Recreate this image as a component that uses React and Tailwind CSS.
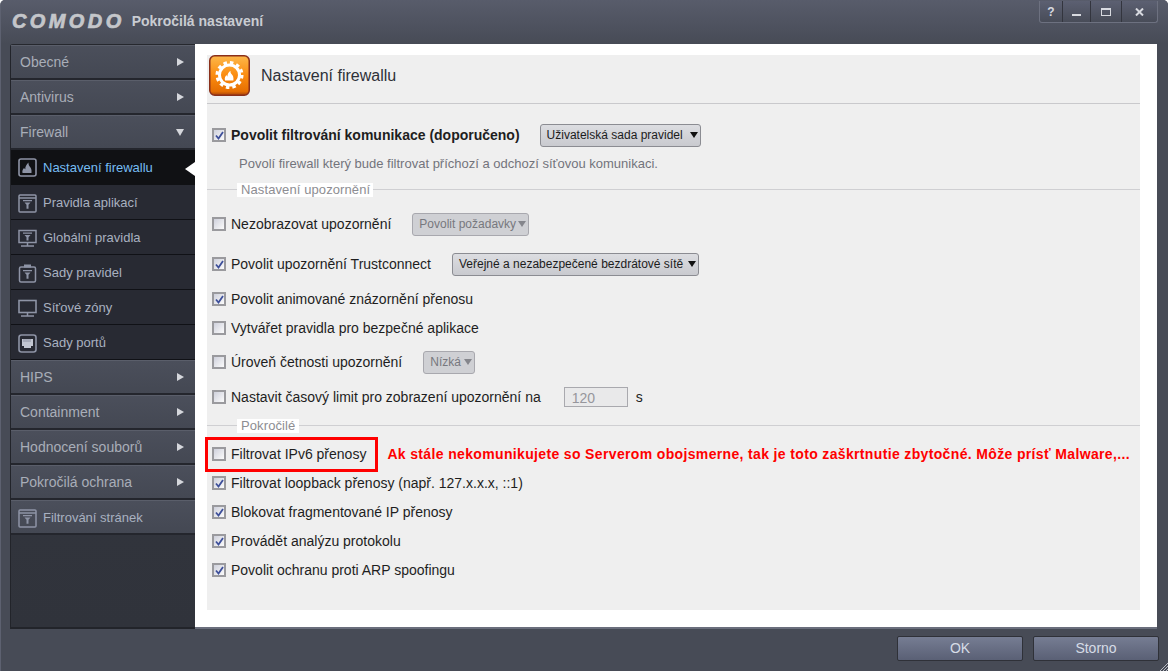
import React from "react"

const menuTop = ["Obecné", "Antivirus"]
const menuBottom = ["HIPS", "Containment", "Hodnocení souborů", "Pokročilá ochrana"]

// Small window frame with a funnel, used by most of the sidebar icons
function FunnelIcon({ variant, color = "#8e94a6" }) {
  return (
    <svg width="19" height="19" viewBox="0 0 19 19" fill="none" className="shrink-0">
      {variant === "global" ? (
        <>
          <rect x="1" y="1.5" width="17" height="12" stroke={color} strokeWidth="1.5" />
          <path d="M9.5 13.5v3M3 17h13" stroke={color} strokeWidth="1.5" />
        </>
      ) : variant === "set" ? (
        <>
          <rect x="1.5" y="3" width="16" height="15" rx="1.5" stroke={color} strokeWidth="1.5" />
          <rect x="6" y="0.5" width="7" height="3" fill={color} />
        </>
      ) : (
        <>
          <rect x="1" y="1" width="17" height="17" rx="1" stroke={color} strokeWidth="1.5" />
          <path d="M1 4h17" stroke={color} strokeWidth="1.5" />
        </>
      )}
      <path
        d={variant === "global" ? "M5 3.5h9v1.2H5zM6.5 6h6l-2 2.2v3.3h-2V8.2z" : "M5 6h9v1.3H5zM6.5 8.5h6l-2 2.2v4h-2v-4z"}
        fill={color}
      />
    </svg>
  )
}

function FirewallIcon() {
  return (
    <svg width="19" height="19" viewBox="0 0 19 19" fill="none" className="shrink-0">
      <rect x="1" y="1" width="17" height="17" rx="2" stroke="#8e94a6" strokeWidth="1.6" />
      <path d="M4.500 15c-.6-2.500.6-4 1.600-5 .3.800.7 1.100 1.200 1.300C7 9 8.500 6.500 10.500 4.500c-.2 2 .6 3.200 1.400 4.200 1 1.200 2 3 1.600 6.300z" fill="#8e94a6" />
    </svg>
  )
}

function MonitorIcon() {
  return (
    <svg width="19" height="19" viewBox="0 0 19 19" fill="none" className="shrink-0">
      <rect x="1" y="1.500" width="17" height="12" stroke="#8e94a6" strokeWidth="1.600" />
      <path d="M9.500 13.500v3M3 17h13" stroke="#8e94a6" strokeWidth="1.500" />
    </svg>
  )
}

function PortIcon() {
  return (
    <svg width="19" height="19" viewBox="0 0 19 19" fill="none" className="shrink-0">
      <rect x="1" y="1" width="17" height="17" rx="2.500" stroke="#8e94a6" strokeWidth="1.600" />
      <path d="M4 5h11v7h-2v2H6v-2H4z" fill="#c3c7d2" />
      <path d="M6 5v3M8 5v3M10 5v3M12 5v3" stroke="#7d8394" strokeWidth="0.800" />
    </svg>
  )
}

function TopItem({ label, open }) {
  return (
    <div className="h-[35px] flex items-center justify-between pl-[9px] pr-[11px] text-[14px] text-[#a9aeb8] bg-gradient-to-b from-[#4b4f5b] to-[#444853] border-t border-t-[#5a5e6a] border-b-2 border-b-[#24262d]">
      <span>{label}</span>
      {open ? (
        <span className="w-0 h-0 border-x-[4px] border-x-transparent border-t-[7px] border-t-[#d5d7dc]" />
      ) : (
        <span className="w-0 h-0 border-y-[4px] border-y-transparent border-l-[7px] border-l-[#d5d7dc]" />
      )}
    </div>
  )
}

function SubItem({ icon, label }) {
  return (
    <div className="h-[35px] flex items-center gap-[6px] pl-[7px] pt-[2px] text-[13px] text-[#a8b1c0] bg-[#282a33] border-b border-b-[#101116]">
      {icon}
      <span>{label}</span>
    </div>
  )
}

function Check({ checked }) {
  return (
    <span className="w-[14px] h-[14px] shrink-0 border-2 border-[#9a9a9e] bg-gradient-to-br from-[#cfd1dc] to-[#fbfbfb] flex items-center justify-center">
      {checked && (
        <svg width="9" height="9" viewBox="0 0 9 9" fill="none">
          <path d="M1 4.500 3.500 7.500 8 1" stroke="#3d4f9a" strokeWidth="1.800" />
        </svg>
      )}
    </span>
  )
}

function Select({ label, width, disabled }) {
  return (
    <div
      className={`h-[23px] ${width} flex items-center justify-between pl-[6px] pr-[2px] text-[12px] rounded-[3px] border ${
        disabled ? "border-[#a8a8ae] bg-[#cfd0d4] text-[#77787e]" : "border-[#8b8c92] bg-gradient-to-b from-[#dcdde1] to-[#c9cacf] text-[#1c1c1c]"
      }`}
    >
      <span className="whitespace-nowrap">{label}</span>
      <span className={`w-0 h-0 border-x-[4px] border-x-transparent border-t-[6px] ${disabled ? "border-t-[#85868c]" : "border-t-[#111]"}`} />
    </div>
  )
}

function Row({ h, checked, bold, label, children }) {
  return (
    <div className={`${h} flex items-center pl-[5px]`}>
      <Check checked={checked} />
      <span className={`ml-[5px] text-[14px] whitespace-nowrap text-[#1e1e1e] ${bold ? "font-bold" : ""}`}>{label}</span>
      {children}
    </div>
  )
}

function Section({ h, label, width }) {
  return (
    <div className={`${h} flex items-center`}>
      <div className="flex-1 relative h-px bg-[#cfcfd2]">
        <span className={`absolute left-[30px] top-[-6px] h-[14px] ${width} whitespace-nowrap bg-white pl-[4px] text-[13px] tracking-[0.1px] leading-[14px] text-[#8d8d92]`}>{label}</span>
      </div>
    </div>
  )
}

function App() {
  return (
    <div className="w-[1168px] h-[671px] flex flex-col overflow-hidden rounded-t-[5px] bg-[#474b56] font-['Liberation_Sans',Arial,sans-serif] relative border-l border-l-[#5d6170]">
      {/* title bar */}
      <div className="h-[44px] shrink-0 flex items-center pl-[11px] pr-[9px] pb-[3px] justify-between bg-gradient-to-b from-[#585c6b] to-[#474b56]">
        <div className="flex items-center gap-[7px] text-[#c9ccd2]">
          <span className="font-bold italic text-[20px] leading-none tracking-[3.400px] text-[#c4c6ca] [-webkit-text-stroke:0.7px_#c4c6ca]">COMODO</span>
          <span className="font-bold text-[14px] leading-none">Pokročilá nastavení</span>
        </div>
        <div className="absolute right-[10px] top-px h-[22px] w-[119px] flex bg-gradient-to-b from-[#5c6072] to-[#484c58] border border-t-0 border-[#6d7180] rounded-b-[3px] text-[#d8dae0]">
          <div className="w-[23px] flex items-center justify-center font-bold text-[12px] border-r border-r-[#33353e]">?</div>
          <div className="w-[28px] flex items-center justify-center border-r border-r-[#33353e]">
            <span className="w-[9px] h-[2px] mt-[7px] bg-[#d8dae0]" />
          </div>
          <div className="w-[31px] flex items-center justify-center border-r border-r-[#33353e]">
            <span className="w-[10px] h-[8px] border border-t-2 border-[#d8dae0]" />
          </div>
          <div className="flex-1 flex items-center justify-center">
            <svg width="9" height="8" viewBox="0 0 9 8" fill="none">
              <path d="M1 .5 8 7.500M8 .5 1 7.500" stroke="#d8dae0" strokeWidth="2" />
            </svg>
          </div>
        </div>
      </div>

      {/* body */}
      <div className="h-[585px] shrink-0 flex pl-[9px] pr-[11px]">
        {/* sidebar */}
        <div className="w-[185px] shrink-0 flex flex-col bg-gradient-to-b from-[#363942] to-[#30333b] border-l border-l-[#22242a] border-t border-t-[#26282e] border-b-2 border-b-[#22242a] rounded-tl-[3px] relative">
          {menuTop.map((m) => (
            <TopItem key={m} label={m} />
          ))}
          <TopItem label="Firewall" open />
          <div className="h-[35px] flex items-center gap-[6px] pl-[7px] text-[13px] text-[#76bdf3] bg-[#101114] relative">
            <FirewallIcon />
            <span>Nastavení firewallu</span>
            <span className="absolute right-0 top-[12px] w-0 h-0 border-y-[7px] border-y-transparent border-r-[10px] border-r-white" />
          </div>
          <SubItem icon={<FunnelIcon />} label="Pravidla aplikací" />
          <SubItem icon={<FunnelIcon variant="global" />} label="Globální pravidla" />
          <SubItem icon={<FunnelIcon variant="set" />} label="Sady pravidel" />
          <SubItem icon={<MonitorIcon />} label="Síťové zóny" />
          <SubItem icon={<PortIcon />} label="Sady portů" />
          {menuBottom.map((m) => (
            <TopItem key={m} label={m} />
          ))}
          <div className="h-[35px] flex items-center gap-[6px] pl-[7px] pt-[2px] text-[13px] text-[#a8b1c0] bg-gradient-to-b from-[#4b4f5b] to-[#444853] border-t border-t-[#5a5e6a] border-b-2 border-b-[#24262d]">
            <FunnelIcon />
            <span>Filtrování stránek</span>
          </div>
        </div>

        {/* content */}
        <div className="flex-1 bg-white pl-[12px] pr-[17px] pt-[11px] pb-[17px] border-b-2 border-b-[#6a6e7c]">
          <div className="h-full bg-[#efefef] flex flex-col">
            <div className="h-[49px] shrink-0 flex items-center pl-[2px] gap-[11px] border-b border-b-[#c9c9cc] pb-[7px]">
              <svg width="41" height="41" viewBox="0 0 41 41" className="shrink-0">
                <defs>
                  <linearGradient id="orange" x1="0" y1="0" x2="0" y2="1">
                    <stop offset="0" stopColor="#fdb84a" />
                    <stop offset="0.5" stopColor="#fb8c10" />
                    <stop offset="0.9" stopColor="#e66f02" />
                    <stop offset="1" stopColor="#a8420a" />
                  </linearGradient>
                </defs>
                <rect x="0.750" y="0.750" width="39.500" height="39.500" rx="5" fill="url(#orange)" stroke="#8a2f1a" strokeWidth="1.500" />
                <circle cx="20.500" cy="20" r="12.500" fill="none" stroke="#fff" strokeWidth="3" strokeDasharray="3.500 3.050" />
                <circle cx="20.500" cy="20" r="10" fill="none" stroke="#fff" strokeWidth="3" />
                <path d="M16 25.500c-.8-2.500.4-4.200 1.500-5.400.2.800.6 1.200 1 1.400-.2-2 .8-4.200 3-5.800-.3 1.800.6 2.800 1.400 3.800 1.100 1.300 1.900 3 1.500 6z" fill="#fff" />
              </svg>
              <span className="text-[16px] text-[#2e3138]">Nastavení firewallu</span>
            </div>

            <div className="h-[14px] shrink-0" />
            <Row h="h-[34px]" checked bold label="Povolit filtrování komunikace (doporučeno)">
              <div className="ml-[20px]">
                <Select label="Uživatelská sada pravidel" width="w-[161px]" />
              </div>
            </Row>
            <div className="h-[24px] flex items-center pl-[32px] text-[13px] text-[#73747c]">
              Povolí firewall který bude filtrovat příchozí a odchozí síťovou komunikaci.
            </div>
            <Section h="h-[26px]" label="Nastavení upozornění" width="w-[136px]" />

            <Row h="h-[44px]" label="Nezobrazovat upozornění">
              <div className="ml-[21px]">
                <Select label="Povolit požadavky" width="w-[117px]" disabled />
              </div>
            </Row>
            <Row h="h-[36px]" checked label="Povolit upozornění Trustconnect">
              <div className="ml-[21px]">
                <Select label="Veřejné a nezabezpečené bezdrátové sítě" width="w-[247px]" />
              </div>
            </Row>
            <Row h="h-[34px]" checked label="Povolit animované znázornění přenosu" />
            <Row h="h-[24px]" label="Vytvářet pravidla pro bezpečné aplikace" />
            <Row h="h-[44px]" label="Úroveň četnosti upozornění">
              <div className="ml-[21px]">
                <Select label="Nízká" width="w-[52px]" disabled />
              </div>
            </Row>
            <Row h="h-[26px]" label="Nastavit časový limit pro zobrazení upozornění na">
              <div className="ml-[23px] w-[64px] h-[20px] border border-[#a9a9ae] bg-[#e9e9ea] pl-[7px] text-[14px] leading-[20px] text-[#96969c]">120</div>
              <span className="ml-[8px] text-[14px] text-[#1e1e1e]">s</span>
            </Row>
            <Section h="h-[30px]" label="Pokročilé" width="w-[62px]" />

            <div className="relative">
              <Row h="h-[28px]" label="Filtrovat IPv6 přenosy">
                <span className="ml-[21px] text-[14px] font-bold tracking-[0.35px] text-[#f00]">
                  Ak stále nekomunikujete so Serverom obojsmerne, tak je toto zaškrtnutie zbytočné. Môže prísť Malware,...
                </span>
              </Row>
              <div className="absolute left-[-2px] top-[-3px] w-[173px] h-[35px] border-[3px] border-[#f00]" />
            </div>
            <Row h="h-[30px]" checked label="Filtrovat loopback přenosy (např. 127.x.x.x, ::1)" />
            <Row h="h-[28px]" checked label="Blokovat fragmentované IP přenosy" />
            <Row h="h-[30px]" checked label="Provádět analýzu protokolu" />
            <Row h="h-[28px]" checked label="Povolit ochranu proti ARP spoofingu" />
          </div>
        </div>
      </div>

      {/* footer */}
      <div className="flex-1 flex justify-end items-start gap-[10px] pt-[7px] pr-[9px] bg-[#474b56] relative">
        <button className="w-[126px] h-[25px] rounded-[2px] border border-[#2f3138] bg-gradient-to-b from-[#767d93] to-[#5a6075] text-[14px] text-[#d6dce6]">OK</button>
        <button className="w-[126px] h-[25px] rounded-[2px] border border-[#2f3138] bg-gradient-to-b from-[#767d93] to-[#5a6075] text-[14px] text-[#d6dce6]">Storno</button>
        <svg width="8" height="8" viewBox="0 0 8 8" className="absolute right-0 bottom-0">
          <path d="M0 8 8 0M3 8l5-5M6 8l2-2" stroke="#b8bbc4" strokeWidth="1" />
        </svg>
      </div>
    </div>
  )
}

export default App
